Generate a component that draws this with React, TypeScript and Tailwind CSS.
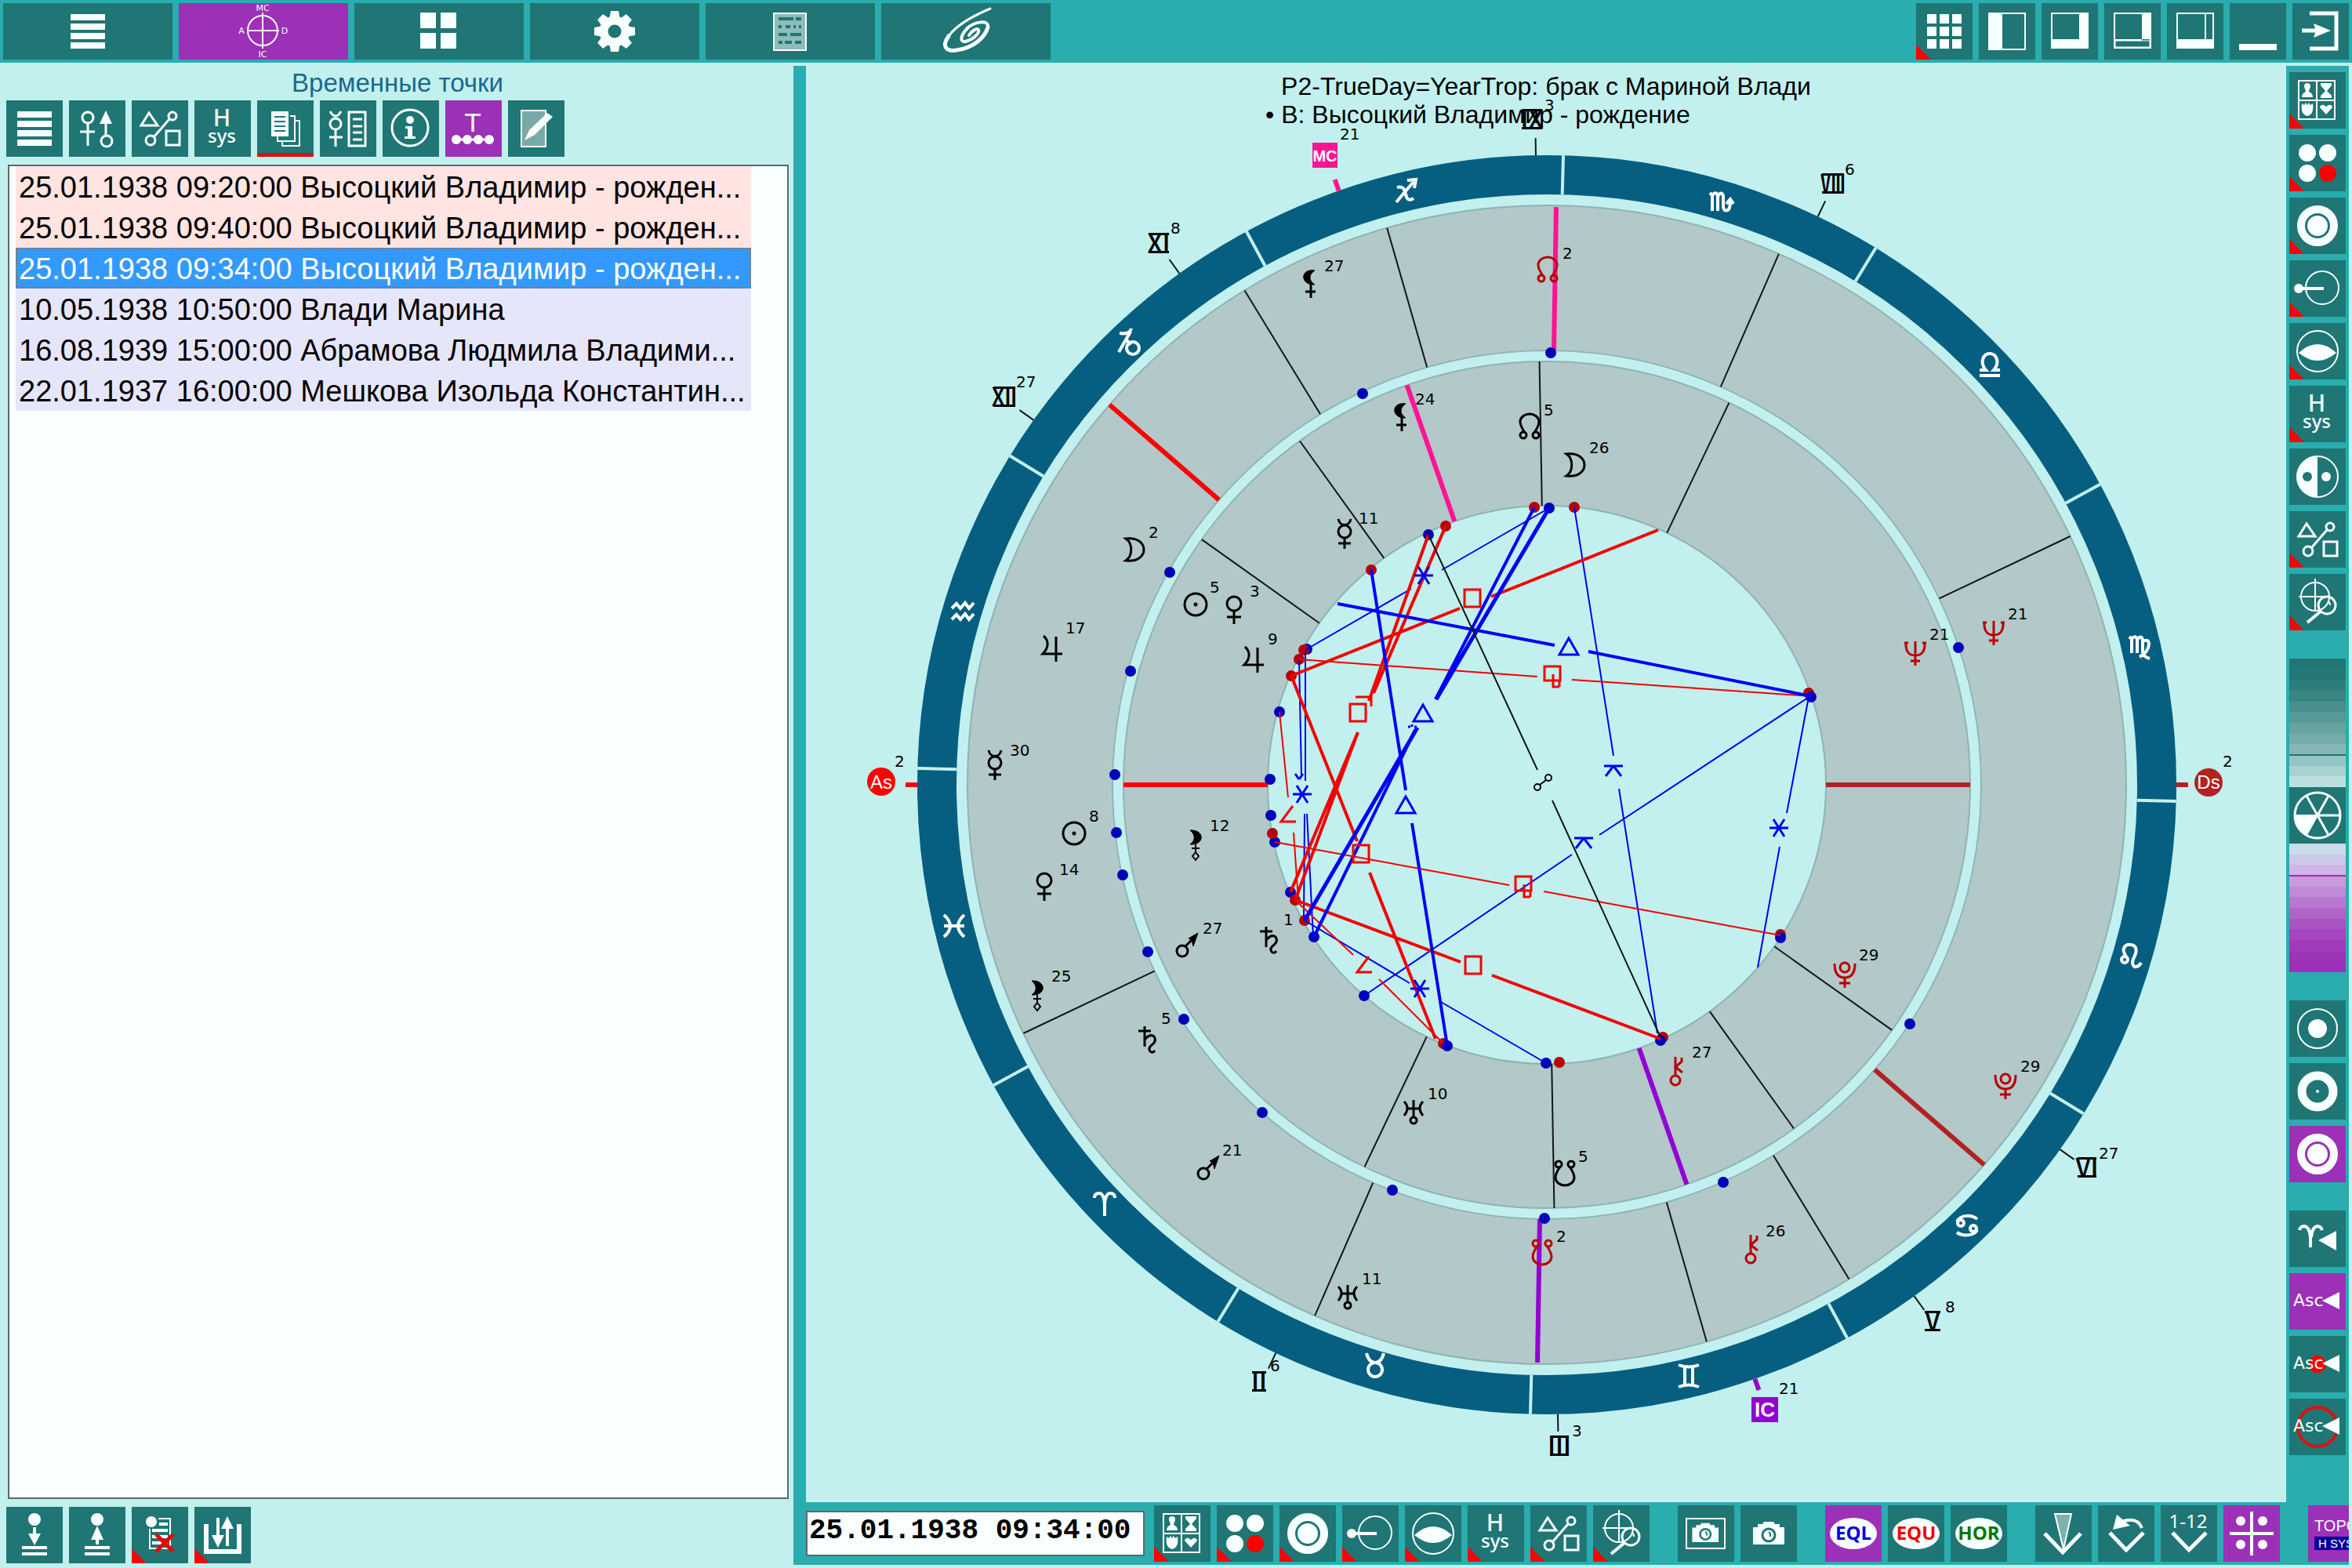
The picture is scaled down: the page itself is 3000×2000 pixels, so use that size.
import type { ReactNode } from "react";

type Point = [number, number];

/* ---------- toolbar icons, all on a 72px grid ---------- */

const HOUSE_ICON = (
  <g fill="#f8ffff" stroke="none" textAnchor="middle" className="font-['Noto_Sans'] font-medium">
    <text x="35" y="33" fontSize="30">H</text>
    <text x="35" y="54" fontSize="24">sys</text>
  </g>
);

const BARS_ICON = (
  <g fill="#f8ffff" stroke="none">
    <path d="M14 14h44v8H14zM14 26h44v8H14zM14 38h44v8H14zM14 50h44v8H14z" />
  </g>
);

const ASPECTS_ICON = (
  <g strokeWidth="3">
    <path d="M22 16L12 32H33Z" />
    <circle cx="52" cy="20" r="5" />
    <circle cx="24" cy="51" r="6" />
    <path d="M48 24L28 47" />
    <rect x="44" y="39" width="17" height="18" />
  </g>
);

const CARDS_ICON = (
  <g strokeWidth="2">
    <rect x="12" y="11" width="46" height="49" />
    <path d="M35 11V60M12 36H58" />
    <g fill="#f8ffff" stroke="none">
      <circle cx="23" cy="18" r="4" />
      <path d="M20 21h6l-1 4q5 2 5 7H16q0-5 5-7z" />
      <path d="M40 14h14v3l-6 7 6 6v3H40v-3l6-6-6-7z" />
      <path d="M16 40l3 2 2-3 2 3 2-3 2 3 3-2q2 14-7 16q-9-2-7-16z" />
      <path d="M47 54L39 45q1-4 5-3l3 2 3-2q4-1 5 3z" />
    </g>
  </g>
);

const DOTS_ICON = (
  <g fill="#f8ffff" stroke="none">
    <circle cx="23" cy="23" r="11" />
    <circle cx="49" cy="23" r="11" />
    <circle cx="23" cy="49" r="11" />
    <circle cx="49" cy="49" r="11" fill="#ff0000" />
  </g>
);

const RINGS_ICON = (
  <>
    <circle cx="36" cy="36" r="21" strokeWidth="10" />
    <circle cx="36" cy="36" r="13" fill="#f8ffff" stroke="none" />
  </>
);

const ORBIT_ICON = (
  <>
    <circle cx="42" cy="35" r="21" strokeWidth="2" />
    <path d="M12 36H44" strokeWidth="4" />
    <circle cx="12" cy="36" r="6" fill="#f8ffff" stroke="none" />
  </>
);

const LENS_ICON = (
  <>
    <circle cx="36" cy="36" r="26" strokeWidth="2" />
    <path d="M12 38Q24 27 36 27T60 38Q48 48 36 48T12 38Z" fill="#f8ffff" stroke="none" />
  </>
);

const HALF_ICON = (
  <>
    <circle cx="36" cy="36" r="26" strokeWidth="2" />
    <path d="M36 10A26 26 0 0 0 36 62Z" fill="#f8ffff" stroke="none" />
    <circle cx="23" cy="36" r="6" fill="#1f7674" stroke="none" />
    <circle cx="47" cy="36" r="6" fill="#f8ffff" stroke="none" />
  </>
);

const SEARCH_ICON = (
  <g strokeWidth="2">
    <circle cx="33" cy="29" r="18" />
    <path d="M33 6V48M12 29H52" />
    <circle cx="48" cy="40" r="11" strokeWidth="3" />
    <path d="M52 40q0-4-3-5" />
    <path d="M41 47L23 62" strokeWidth="4" />
  </g>
);

const CHART_ICON = (
  <g strokeWidth="2">
    <circle cx="35" cy="35" r="19" />
    <path d="M15 35H56M35 12V58" />
    <g fill="#f8ffff" stroke="none" fontSize="11" textAnchor="middle" className="font-['DejaVu_Sans']">
      <text x="35" y="10">MC</text>
      <text x="35" y="69">IC</text>
      <text x="8" y="39">A</text>
      <text x="63" y="39">D</text>
    </g>
  </g>
);

const TILES_ICON = (
  <path d="M12 12h20v20H12zM38 12h20v20H38zM12 38h20v20H12zM38 38h20v20H38z" fill="#f8ffff" stroke="none" />
);

const GEAR_ICON = (
  <>
    <g stroke="none" fill="#f8ffff">
      {[0, 45, 90, 135, 180, 225, 270, 315].map((a) => (
        <path key={a} d="M31 10H41L43 22H29Z" transform={`rotate(${a} 36 36)`} />
      ))}
    </g>
    <circle cx="36" cy="36" r="14" strokeWidth="11" />
  </>
);

const SHEET_ICON = (
  <>
    <rect x="15" y="13" width="41" height="47" fill="#8dbcba" strokeWidth="2" />
    <g stroke="#1f7674" strokeWidth="4">
      <path d="M21 20H40M43 20H50" />
      <path d="M21 30H25M30 30H36M40 30H43M47 30H50" />
      <path d="M21 40H32M36 40H50" />
      <path d="M21 50H26M29 50H38M42 50H50" />
    </g>
  </>
);

const SWIRL_ICON = (
  <g strokeLinecap="round">
    <path d="M67 7C48 15 24 28 14 42" strokeWidth="3" />
    <path d="M14 42C4 56 12 62 24 60C46 57 60 44 64 31" strokeWidth="5" />
    <path d="M64 31C66 20 46 24 38 32C29 41 28 50 35 49C45 47 54 38 52 34C50 31 43 36 40 41" strokeWidth="4" />
  </g>
);

const GRID9_ICON = (
  <path
    d="M14 14h12v12H14zM30 14h12v12H30zM46 14h12v12H46zM14 30h12v12H14zM30 30h12v12H30zM46 30h12v12H46zM14 46h12v12H14zM30 46h12v12H30zM46 46h12v12H46z"
    fill="#f8ffff"
    stroke="none"
  />
);

const PANE_LEFT_ICON = (
  <>
    <rect x="13" y="13" width="46" height="46" strokeWidth="2" />
    <path d="M12 12h18v48H12z" fill="#f8ffff" stroke="none" />
  </>
);

const PANE_RIGHT_BOTTOM_ICON = (
  <>
    <rect x="13" y="13" width="46" height="44" strokeWidth="2" />
    <path d="M48 12h12v46H12V46h36z" fill="#f8ffff" stroke="none" />
  </>
);

const PANE_RIGHT_ICON = (
  <>
    <rect x="13" y="13" width="46" height="44" strokeWidth="2" />
    <path d="M13 47H48" strokeWidth="2" />
    <path d="M48 12h12v34H48z" fill="#f8ffff" stroke="none" />
    <path d="M14 48H58V56H14Z" fill="#1f7674" strokeWidth="1" />
  </>
);

const PANE_BOTTOM_ICON = (
  <>
    <rect x="13" y="13" width="46" height="44" strokeWidth="2" />
    <path d="M49 12V46" strokeWidth="2" />
    <path d="M12 46h48v12H12z" fill="#f8ffff" stroke="none" />
  </>
);

const MINIMIZE_ICON = <path d="M12 52h48v8H12z" fill="#f8ffff" stroke="none" />;

const EXIT_ICON = (
  <>
    <path d="M22 13H56V58H22" strokeWidth="5" />
    <path d="M12 35H30" strokeWidth="5" />
    <path d="M27 26L49 35L27 44L30 35Z" fill="#f8ffff" stroke="none" />
  </>
);

const PLANETS_ICON = (
  <g strokeWidth="3">
    <circle cx="24" cy="22" r="7" />
    <path d="M24 29V58M14 40H33" />
    <path d="M47 24V44" />
    <circle cx="48" cy="52" r="7" />
    <path d="M47 13L55 30H39Z" fill="#f8ffff" stroke="none" />
  </g>
);

const PAGES_ICON = (
  <g strokeWidth="2">
    <path d="M42 20H48V52H26V46" />
    <path d="M48 26H54V58H32V52" />
    <path d="M18 14h22v32H18z" fill="#f8ffff" stroke="none" />
    <path d="M22 21H36M22 27H36M22 33H36M22 39H36" stroke="#1f7674" />
    <path d="M0 67h72v5H0z" fill="#e01010" stroke="none" />
  </g>
);

const PLANET_LIST_ICON = (
  <g strokeWidth="3">
    <path d="M13 14Q20 26 27 14" />
    <circle cx="20" cy="30" r="7" />
    <path d="M20 37V59M12 47H29" />
    <rect x="37" y="15" width="21" height="43" />
    <path d="M42 24H54M42 33H54M42 41H54M42 50H54" />
  </g>
);

const INFO_ICON = (
  <>
    <circle cx="35" cy="35" r="23" strokeWidth="3" />
    <circle cx="35" cy="25" r="5" fill="#f8ffff" stroke="none" />
    <path d="M29 33h9v13h4v3H28v-3h4V36h-3z" fill="#f8ffff" stroke="none" />
  </>
);

const TIME_ICON = (
  <>
    <text x="35" y="40" fontSize="32" fill="#f8ffff" stroke="none" textAnchor="middle" className="font-['DejaVu_Sans']">
      T
    </text>
    <path d="M14 50H56" strokeWidth="3" />
    <g fill="#f8ffff" stroke="none">
      <circle cx="14" cy="50" r="6" />
      <circle cx="28" cy="50" r="6" />
      <circle cx="42" cy="50" r="6" />
      <circle cx="56" cy="50" r="6" />
    </g>
  </>
);

const NOTE_ICON = (
  <>
    <rect x="17" y="13" width="31" height="46" fill="#78aaa8" strokeWidth="2" />
    <path d="M21 51L27 38L50 16L57 21L34 44Z" fill="#f8ffff" stroke="none" />
  </>
);

const INSERT_ICON = (
  <>
    <path d="M36 26V40" strokeWidth="4" />
    <path d="M28 34h16l-8 15zM20 50h32v4H20zM20 58h32v4H20z" fill="#f8ffff" stroke="none" />
    <circle cx="36" cy="16" r="8" fill="#f8ffff" stroke="none" />
  </>
);

const TAKE_ICON = (
  <>
    <path d="M36 36V48" strokeWidth="4" />
    <path d="M36 24l8 18H28zM20 50h32v4H20zM20 58h32v4H20z" fill="#f8ffff" stroke="none" />
    <circle cx="36" cy="16" r="8" fill="#f8ffff" stroke="none" />
  </>
);

const DELETE_ICON = (
  <>
    <path d="M34 15H49V53H23V28" strokeWidth="2" />
    <path d="M35 22H46M26 30H46M26 38H46M26 46H46" strokeWidth="4" />
    <circle cx="25" cy="19" r="7" fill="#f8ffff" stroke="none" />
    <path d="M31 35L53 57M53 35L31 57" stroke="#ee0000" strokeWidth="5" />
  </>
);

const TRANSFER_ICON = (
  <>
    <path d="M15 22V57H57V22" strokeWidth="6" />
    <path d="M30 14V42M42 24V50" strokeWidth="4" />
    <path d="M22 36h16l-8 16zM42 12l8 16H34z" fill="#f8ffff" stroke="none" />
  </>
);

const CAMERA_SHAPE = (
  <>
    <path d="M16 28h6v-4h6l2-3h12l2 3h6v4h6v22H16z" fill="#f8ffff" stroke="none" />
    <circle cx="36" cy="38" r="8" stroke="#1f7674" strokeWidth="3" />
    <path d="M36 34q3 2 2 6" stroke="#1f7674" strokeWidth="2" />
  </>
);

const CAMERA_FRAME_ICON = (
  <>
    <rect x="11" y="17" width="49" height="38" strokeWidth="2" />
    <g transform="translate(5 5) scale(.84)">{CAMERA_SHAPE}</g>
  </>
);

const FALL_ICON = (
  <>
    <path d="M12 36L35 60L58 36" strokeWidth="5" />
    <path d="M25 11H46L36 56Z" fill="#7fb0ae" strokeWidth="2" />
  </>
);

const BACK_ICON = (
  <>
    <path d="M15 35L36 57L58 35" strokeWidth="5" />
    <path d="M30 21Q50 14 56 29" strokeWidth="4" />
    <path d="M19 31L24 12L41 26Z" fill="#f8ffff" stroke="none" />
  </>
);

const TWELVE_ICON = (
  <>
    <path d="M15 35L36 57L58 35" strokeWidth="5" />
    <text x="35" y="29" fontSize="24" fill="#f8ffff" stroke="none" textAnchor="middle" className="font-['Noto_Sans']">
      1-12
    </text>
  </>
);

const QUADRANT_ICON = (
  <>
    <path d="M36 8V64M8 36H64" strokeWidth="4" />
    <g fill="#f8ffff" stroke="none">
      <circle cx="22" cy="20" r="6" />
      <circle cx="50" cy="20" r="6" />
      <circle cx="22" cy="50" r="6" />
      <circle cx="50" cy="50" r="6" />
    </g>
  </>
);

const TOPO_ICON = (
  <g stroke="none" fill="#f8ffff" className="font-['Liberation_Sans']">
    <text x="8" y="33" fontSize="20">TOPO</text>
    <path d="M8 40h64v17H8z" fill="#00009c" />
    <text x="13" y="54" fontSize="15">H SYS</text>
  </g>
);

const WHEEL_ICON = (
  <>
    <circle cx="36" cy="36" r="29" strokeWidth="3" />
    <path d="M36 36H65M36 36L50 11M36 36L22 11M36 36L50 61" strokeWidth="3" />
    <path d="M36 36H7A29 29 0 0 0 22 61Z" fill="#f8ffff" strokeWidth="2" />
  </>
);

const CORE_ICON = (
  <>
    <circle cx="36" cy="36" r="25" strokeWidth="2" />
    <circle cx="36" cy="36" r="12" fill="#f8ffff" stroke="none" />
  </>
);

const BAND_ICON = (
  <>
    <circle cx="36" cy="36" r="20" strokeWidth="11" />
    <circle cx="36" cy="36" r="2" fill="#f8ffff" stroke="none" />
  </>
);

const ARIES_ICON = (
  <>
    <path d="M13 25Q14 20 19 20Q26 21 27 34V47M42 25Q40 20 36 20Q29 21 28 34" strokeWidth="4" />
    <path d="M37 38L60 26V51Z" fill="#f8ffff" stroke="none" />
  </>
);

const ASC_LABEL = (
  <g stroke="none" fill="#f8ffff">
    <text x="5" y="42" fontSize="22" className="font-['DejaVu_Sans']">
      Asc
    </text>
    <path d="M42 35L64 24V46Z" />
  </g>
);

const ASC_DOT_ICON = (
  <>
    <circle cx="36" cy="36" r="11" fill="#ff0000" stroke="none" />
    {ASC_LABEL}
  </>
);

const ASC_RING_ICON = (
  <>
    <circle cx="36" cy="36" r="25" stroke="#dd1111" strokeWidth="4" />
    {ASC_LABEL}
  </>
);

function coordIcon(text: string, color: string) {
  return (
    <g stroke="none">
      <ellipse cx="36" cy="36" rx="30" ry="20" fill="#f8ffff" />
      <text x="36" y="44" fontSize="24" fill={color} textAnchor="middle" className="font-['Open_Sans'] font-bold">
        {text}
      </text>
    </g>
  );
}

interface ToolProps {
  label: string;
  icon: ReactNode;
  active?: boolean;
  menu?: boolean;
  wide?: boolean;
}

function Tool({ label, icon, active, menu, wide }: ToolProps) {
  return (
    <button
      type="button"
      aria-label={label}
      className={`flex h-[72px] shrink-0 justify-center ${wide ? "w-[216px]" : "w-[72px]"} ${
        active ? "bg-[#9c30b6]" : "bg-[#1f7674]"
      }`}
    >
      <svg width="72" height="72" viewBox="0 0 72 72" fill="none" stroke="#f8ffff">
        {icon}
        {menu && <path d="M0 53L19 72H0Z" fill="#ff0000" stroke="none" />}
      </svg>
    </button>
  );
}

const MAIN_TABS: ToolProps[] = [
  { label: "Меню", icon: BARS_ICON },
  { label: "Карта", icon: CHART_ICON, active: true },
  { label: "Окна", icon: TILES_ICON },
  { label: "Настройки", icon: GEAR_ICON },
  { label: "Таблица", icon: SHEET_ICON },
  { label: "О программе", icon: SWIRL_ICON },
];

const WINDOW_TOOLS: ToolProps[] = [
  { label: "Сетка", icon: GRID9_ICON, menu: true },
  { label: "Левая панель", icon: PANE_LEFT_ICON },
  { label: "Правая и нижняя панели", icon: PANE_RIGHT_BOTTOM_ICON },
  { label: "Правая панель", icon: PANE_RIGHT_ICON },
  { label: "Нижняя панель", icon: PANE_BOTTOM_ICON },
  { label: "Свернуть", icon: MINIMIZE_ICON },
  { label: "Выход", icon: EXIT_ICON },
];

const LIST_TOOLS: ToolProps[] = [
  { label: "Список", icon: BARS_ICON },
  { label: "Планеты", icon: PLANETS_ICON },
  { label: "Аспекты", icon: ASPECTS_ICON },
  { label: "Дома", icon: HOUSE_ICON },
  { label: "Страницы", icon: PAGES_ICON },
  { label: "Положения", icon: PLANET_LIST_ICON },
  { label: "Информация", icon: INFO_ICON },
  { label: "Временные точки", icon: TIME_ICON, active: true },
  { label: "Заметки", icon: NOTE_ICON },
];

const EDIT_TOOLS: ToolProps[] = [
  { label: "Добавить", icon: INSERT_ICON },
  { label: "Извлечь", icon: TAKE_ICON },
  { label: "Удалить", icon: DELETE_ICON, menu: true },
  { label: "Обмен", icon: TRANSFER_ICON, menu: true },
];

const BOTTOM_GROUPS: ToolProps[][] = [
  [
    { label: "Наборы", icon: CARDS_ICON, menu: true },
    { label: "Точки", icon: DOTS_ICON, menu: true },
    { label: "Круги", icon: RINGS_ICON, menu: true },
    { label: "Орбита", icon: ORBIT_ICON, menu: true },
    { label: "Горизонт", icon: LENS_ICON, menu: true },
    { label: "Система домов", icon: HOUSE_ICON, menu: true },
    { label: "Аспекты", icon: ASPECTS_ICON, menu: true },
    { label: "Поиск", icon: SEARCH_ICON, menu: true },
  ],
  [
    { label: "Снимок окна", icon: CAMERA_FRAME_ICON },
    { label: "Снимок", icon: CAMERA_SHAPE },
  ],
  [
    { label: "Эклиптика", icon: coordIcon("EQL", "#0000dd"), active: true },
    { label: "Экватор", icon: coordIcon("EQU", "#ee0000") },
    { label: "Горизонт", icon: coordIcon("HOR", "#007800") },
  ],
  [
    { label: "Вниз", icon: FALL_ICON },
    { label: "Назад", icon: BACK_ICON },
    { label: "Дома 1-12", icon: TWELVE_ICON },
    { label: "Квадранты", icon: QUADRANT_ICON, active: true },
  ],
  [{ label: "Топоцентрическая", icon: TOPO_ICON, active: true }],
];

const SIDE_TOP: ToolProps[] = [
  { label: "Наборы", icon: CARDS_ICON, menu: true },
  { label: "Точки", icon: DOTS_ICON, menu: true },
  { label: "Круги", icon: RINGS_ICON, menu: true },
  { label: "Орбита", icon: ORBIT_ICON, menu: true },
  { label: "Горизонт", icon: LENS_ICON, menu: true },
  { label: "Система домов", icon: HOUSE_ICON, menu: true },
  { label: "Инь-ян", icon: HALF_ICON },
  { label: "Аспекты", icon: ASPECTS_ICON, menu: true },
  { label: "Поиск", icon: SEARCH_ICON, menu: true },
];

const SIDE_RINGS: ToolProps[] = [
  { label: "Центр", icon: CORE_ICON },
  { label: "Внешний круг", icon: BAND_ICON },
  { label: "Оба круга", icon: RINGS_ICON, active: true },
];

const SIDE_START: ToolProps[] = [
  { label: "От Овна", icon: ARIES_ICON },
  { label: "От Асцендента", icon: ASC_LABEL, active: true },
  { label: "Внутренний Асцендент", icon: ASC_DOT_ICON },
  { label: "Внешний Асцендент", icon: ASC_RING_ICON },
];

const TEAL_SHADES = [
  "bg-[#1f7674]", "bg-[#247876]", "bg-[#2c7d7c]", "bg-[#388583]", "bg-[#488f8d]", "bg-[#579997]",
  "bg-[#66a3a1]", "bg-[#76adab]", "bg-[#86b7b6]", "bg-[#96c4c4]", "bg-[#a8d2d1]", "bg-[#bbe0de]",
];

const PURPLE_SHADES = [
  "bg-[#c8dcea]", "bg-[#ccc8e8]", "bg-[#cfb6e4]", "bg-[#c79bdc]", "bg-[#c08ad6]", "bg-[#b876cf]",
  "bg-[#b064c8]", "bg-[#a954c2]", "bg-[#a446bd]", "bg-[#a03bb9]", "bg-[#9e34b7]", "bg-[#9c30b6]",
];

/* ---------- chart ---------- */

const CX = 1973;
const CY = 1001;

const BODIES: Record<string, ReactNode> = {
  sun: (
    <>
      <circle r="14" />
      <circle r="1" />
    </>
  ),
  moon: <path d="M-11-14C4-16 12-8 12 0S4 16-11 14C-2 8-2-8-11-14Z" />,
  mercury: (
    <>
      <path d="M-8-19C-6-9 6-9 8-19M0 5V19M-8 12H8" />
      <circle cy="-3" r="8" />
    </>
  ),
  venus: (
    <>
      <circle cy="-8" r="9" />
      <path d="M0 2V18M-9 9H9" />
    </>
  ),
  mars: (
    <>
      <circle cx="-6" cy="7" r="7" />
      <path d="M-2 1L8-9" />
      <path d="M14-16L2-9L6-7L8 1Z" fill="currentColor" strokeWidth="1" />
    </>
  ),
  jupiter: <path d="M-11-16C-4-10-4-1-12 7H13M5-15V17" />,
  saturn: <path d="M-4-17V9M-12-11H4M-4 0Q3-8 8-4Q12 2 5 7Q0 11 3 15Q6 18 9 14" />,
  uranus: (
    <>
      <path d="M-12-13Q-4-5-12 5M12-13Q4-5 12 5M-8-4H8M0-15V7" />
      <circle cy="11" r="4" />
    </>
  ),
  neptune: <path d="M-12-14Q-13 3 0 3Q13 3 12-14M0-15V16M-6 10H6M-14-13H-9M9-13H14" />,
  pluto: (
    <>
      <path d="M-13-14Q-13 4 0 4Q13 4 13-14M0 4V17M-7 11H7" />
      <circle cy="-9" r="6" />
    </>
  ),
  chiron: (
    <>
      <circle cy="12" r="6" />
      <path d="M0-18V6M8-17V-12L0-5L9 2" />
    </>
  ),
  north: (
    <>
      <path d="M-6 8C-10 2-12-3-12-6C-12-12-6-16 0-16S12-12 12-6C12-3 10 2 6 8" />
      <circle cx="-8" cy="11" r="4" />
      <circle cx="8" cy="11" r="4" />
    </>
  ),
  south: (
    <>
      <path d="M-6-8C-10-2-12 3-12 6C-12 12-6 16 0 16S12 12 12 6C12 3 10-2 6-8" />
      <circle cx="-8" cy="-11" r="4" />
      <circle cx="8" cy="-11" r="4" />
    </>
  ),
  lilith: (
    <>
      <path d="M7-17C-12-20-12 2 7 1C-1-4-1-12 7-17Z" fill="currentColor" strokeWidth="1" />
      <path d="M2 0V18M-5 10H8" />
    </>
  ),
  selena: (
    <>
      <path d="M-7-19C12-20 12 0-7-1C0-6 0-13-7-19Z" fill="currentColor" strokeWidth="1" />
      <path d="M0-1V9M-5 4H5M0 9L4 14L0 19L-4 14Z" strokeWidth="2" />
    </>
  ),
};

// body, centre x, centre y, degree, degree x, degree baseline
type Placement = [string, number, number, string, number, number];

const DARK_BODIES: Placement[] = [
  ["lilith", 1670, 362, "27", 1689, 346],
  ["lilith", 1786, 532, "24", 1805, 516],
  ["north", 1951, 544, "5", 1969, 530],
  ["moon", 2009, 593, "26", 2027, 578],
  ["mercury", 1715, 681, "11", 1733, 668],
  ["moon", 1447, 701, "2", 1465, 686],
  ["jupiter", 1342, 827, "17", 1359, 808],
  ["mercury", 1269, 976, "30", 1288, 964],
  ["sun", 1370, 1063, "8", 1389, 1048],
  ["venus", 1332, 1131, "14", 1351, 1116],
  ["selena", 1323, 1270, "25", 1341, 1252],
  ["saturn", 1464, 1326, "5", 1481, 1306],
  ["mars", 1541, 1490, "21", 1559, 1474],
  ["uranus", 1719, 1654, "11", 1737, 1638],
  ["sun", 1525, 771, "5", 1543, 756],
  ["venus", 1574, 778, "3", 1594, 761],
  ["jupiter", 1599, 841, "9", 1617, 822],
  ["selena", 1525, 1078, "12", 1543, 1060],
  ["mars", 1514, 1206, "27", 1534, 1191],
  ["saturn", 1619, 1199, "1", 1637, 1180],
  ["uranus", 1803, 1418, "10", 1821, 1402],
  ["south", 1996, 1496, "5", 2013, 1482],
];

const RED_BODIES: Placement[] = [
  ["north", 1974, 344, "2", 1993, 330],
  ["south", 1967, 1597, "2", 1985, 1584],
  ["chiron", 2233, 1593, "26", 2252, 1577],
  ["chiron", 2137, 1366, "27", 2158, 1349],
  ["pluto", 2558, 1385, "29", 2577, 1367],
  ["pluto", 2353, 1243, "29", 2371, 1225],
  ["neptune", 2543, 807, "21", 2561, 790],
  ["neptune", 2443, 833, "21", 2461, 816],
];

const SIGNS: [string, number, number, ReactNode][] = [
  ["sagittarius", 1793, 244, <path d="M-12 14Q-4 4 10-12M2-14L13-15L11-4M-11-5Q-2-8 0 4Q2 14 10 9" />],
  ["capricorn", 1439, 436, <><path d="M-11-11Q2-9 4-17M3-13L-12 13M-3-4L3 4" /><circle cx="6" cy="8" r="8" /></>],
  ["aquarius", 1229, 780, <path d="M-15-4L-9-10L-4-4L2-11L7-4L13-11M-15 10L-9 4L-4 10L2 3L7 10L13 3" />],
  ["pisces", 1217, 1181, <path d="M-13-14Q3 0-13 14M13-14Q-3 0 13 14M-13 0H13" />],
  ["aries", 1409, 1536, <path d="M-13-8Q-13-14-7-14Q-1-14 0 0V15M13-8Q13-14 7-14Q1-14 0 0" />],
  ["taurus", 1754, 1741, <><path d="M-11-15Q-8-3 0-3Q8-3 11-15" /><circle cy="6" r="9" /></>],
  ["gemini", 2154, 1755, <path d="M-13-14Q0-9 13-14M-13 14Q0 9 13 14M-5-11V11M5-11V11" />],
  ["cancer", 2509, 1563, <><path d="M-13-5C-8-14 6-14 13-8M13 6C8 14-6 14-13 9" /><circle cx="-8" cy="-3" r="4" /><circle cx="8" cy="4" r="4" /></>],
  ["leo", 2718, 1219, <><circle cx="-8" cy="5" r="4" /><path d="M-6 1C-14-10-6-15 0-14C8-13 8-5 4 2C0 10 3 15 7 14Q11 13 13 9" /></>],
  ["virgo", 2730, 824, <path d="M-14-12L-11-9V9M-11-9Q-6-15-4-8V9M-4-8Q1-15 3-8V8Q4 14 12 16M3-6Q11-10 11-2Q10 8-1 14" />],
  ["libra", 2538, 465, <path d="M-13 14H13M-13 7H-5C-13-2-9-14 0-14S13-2 5 7H13" />],
  ["scorpio", 2195, 258, <path d="M-14-12L-11-9V11M-11-9Q-6-15-4-8V11M-4-8Q1-15 3-8V6Q4 12 9 10Q12 8 12-3M7 2L12-4L16 2" />],
];

// numeral, centre x, baseline, degree, degree x, degree baseline, width of the serif bars
const HOUSES: [string, number, number, string, number, number, number][] = [
  ["Ⅸ", 1954, 164, "3", 1970, 141, 26],
  ["Ⅺ", 1478, 322, "8", 1493, 298, 26],
  ["Ⅻ", 1281, 518, "27", 1296, 494, 28],
  ["Ⅱ", 1606, 1774, "6", 1620, 1749, 18],
  ["Ⅲ", 1989, 1856, "3", 2005, 1832, 24],
  ["Ⅴ", 2465, 1697, "8", 2481, 1674, 20],
  ["Ⅵ", 2662, 1501, "27", 2677, 1478, 24],
  ["Ⅷ", 2338, 246, "6", 2353, 223, 28],
];

const OUTER_CUSPS = [253.99, 238.56, 293.6, 334.6, 73.99, 58.56, 113.6, 154.6];
const INNER_CUSPS = [215.4, 234.3, 269, 295.5, 35.4, 54.3, 89, 115.5];

const MIDDLE_DOTS: Point[] = [
  [1738, 502], [1978, 450], [1492, 730], [1442, 856], [1422, 988], [1424, 1062], [1432, 1116], [1464, 1214],
  [1510, 1300], [1610, 1419], [1776, 1518], [1970, 1554], [2198, 1508], [2436, 1306], [2498, 826],
];

const BLUE = "#0000f4";
const RED = "#f40000";

const INNER_DOTS: [number, number, string][] = [
  [1667, 828, "#0000b8"], [1663, 829, "#b80000"], [1749, 727, "#b80000"], [1822, 682, "#0000b8"],
  [1844, 671, "#b80000"], [1957, 647, "#b80000"], [1976, 648, "#0000b8"], [2008, 647, "#b80000"],
  [1657, 841, "#b80000"], [1647, 862, "#b80000"], [1632, 908, "#0000b8"], [1620, 994, "#0000b8"],
  [1621, 1040, "#0000b8"], [1626, 1074, "#0000b8"], [1623, 1063, "#b80000"], [1646, 1138, "#0000b8"],
  [1652, 1148, "#b80000"], [1664, 1174, "#b80000"], [1676, 1195, "#0000b8"], [1740, 1270, "#0000b8"],
  [1841, 1331, "#b80000"], [1846, 1334, "#0000b8"], [1972, 1356, "#0000b8"], [1989, 1355, "#b80000"],
  [2121, 1323, "#b80000"], [2118, 1327, "#0000b8"], [2271, 1192, "#b80000"], [2271, 1196, "#0000b8"],
  [2307, 884, "#b80000"], [2310, 889, "#0000b8"],
];

// colour, stroke width, path
const ASPECT_LINES: [string, number, string][] = [
  [BLUE, 2, "M1976 648L1839 727M1800 751L1665 829"],
  [BLUE, 2, "M2309 888L2040 1065M2005 1090L1740 1270"],
  [BLUE, 2, "M1664 1174L1798 1254M1838 1278L1972 1356"],
  [BLUE, 2, "M2008 647L2058 964M2065 1006L2114 1318"],
  [BLUE, 2, "M2307 889L2279 1037M2270 1080L2242 1234"],
  [BLUE, 2, "M1665 829V996M1657 841L1660 991M1664 1038L1663 1174M1667 1038L1675 1195"],
  [RED, 2, "M1632 908L1643 1017M1650 1062L1656 1148"],
  [RED, 2, "M1652 1148L1726 1218M1759 1249L1841 1331"],
  [RED, 2, "M1657 841L1961 863M2005 867L2310 888"],
  [RED, 2, "M1626 1074L1925 1129M1969 1137L2271 1193"],
  [RED, 4, "M1822 682L1746 894M1844 671L1752 884M1732 934L1646 1138M1732 934L1652 1148"],
  [RED, 4, "M1647 862L1862 776M1902 761L2115 676"],
  [RED, 4, "M1647 862L1731 1073M1747 1113L1831 1325"],
  [RED, 4, "M1652 1148L1863 1227M1903 1244L2118 1325"],
  [BLUE, 4, "M1706 770L1983 823M2026 831L2310 888"],
  [BLUE, 4, "M1749 727L1793 1008M1801 1050L1846 1334"],
  [BLUE, 4, "M1957 647L1831 892M1805 931L1676 1195"],
  [BLUE, 5, "M1976 648L1832 892M1808 928L1664 1174"],
  ["#101818", 2, "M1822 682L1961 982M1980 1021L2118 1323"],
];

const STAR = "M-12 0H12M-7-11L7 11M7-11L-7 11";
const SQUARE = "M-10-11H10V11H-10Z";
const TRINE = "M0-11L-12 10H12Z";
const QUINCUNX = "M-12-6H12M0-6L-10 7M0-6L10 7";
const SESQUI = "M-10-13H10V5H-10ZM1-3V13H9M1 5H9V13";
const SEMI = "M6-11L-9 9H10";

const ASPECT_MARKS: [number, number, string, string][] = [
  [1816, 734, BLUE, STAR],
  [1661, 1013, BLUE, STAR],
  [2269, 1056, BLUE, STAR],
  [1811, 1261, BLUE, STAR],
  [1657, 990, BLUE, "M-5-3L0 4M5-3L0 4"],
  [1732, 909, RED, SQUARE],
  [1739, 893, RED, "M-10-4H10V8"],
  [1878, 763, RED, SQUARE],
  [1736, 1089, RED, SQUARE],
  [1879, 1231, RED, SQUARE],
  [2001, 825, BLUE, TRINE],
  [1793, 1027, BLUE, TRINE],
  [1815, 910, BLUE, TRINE],
  [1801, 927, BLUE, "M0-3V0M-5 0H-2M3 0H6"],
  [2058, 983, BLUE, QUINCUNX],
  [2020, 1075, BLUE, QUINCUNX],
  [1980, 863, RED, SESQUI],
  [1943, 1131, RED, SESQUI],
  [1643, 1039, RED, SEMI],
  [1740, 1231, RED, SEMI],
];

function radial(angle: number, from: number, to: number) {
  const a = (angle * Math.PI) / 180;
  return {
    x1: CX + Math.cos(a) * from,
    y1: CY + Math.sin(a) * from,
    x2: CX + Math.cos(a) * to,
    y2: CY + Math.sin(a) * to,
  };
}

function Bodies({ items, color }: { items: Placement[]; color: string }) {
  return (
    <>
      {items.map(([body, x, y, degree, dx, dy]) => (
        <g key={`${body}-${x}`}>
          <g transform={`translate(${x} ${y})`} fill="none" stroke={color} color={color} strokeWidth="3">
            {BODIES[body]}
          </g>
          <text x={dx} y={dy} fontSize="20">{degree}</text>
        </g>
      ))}
    </>
  );
}

function NatalChart() {
  return (
    <svg viewBox="1028 84 1888 1832" className="block h-full w-full font-['DejaVu_Sans']" role="img" aria-label="Карта">
      {/* zodiac belt and the two house rings */}
      <circle cx={CX} cy={CY} r="778" fill="none" stroke="#065f80" strokeWidth="50" />
      <circle cx={CX} cy={CY} r="647" fill="none" stroke="#b3c8c9" strokeWidth="184" />
      <circle cx={CX} cy={CY} r="448" fill="none" stroke="#b3c8c9" strokeWidth="184" />
      <g fill="none" stroke="#8fb3b3" strokeWidth="2">
        <circle cx={CX} cy={CY} r="739" />
        <circle cx={CX} cy={CY} r="554" />
        <circle cx={CX} cy={CY} r="540" />
        <circle cx={CX} cy={CY} r="356" />
      </g>

      {Array.from({ length: 12 }, (_, i) => (
        <line key={i} {...radial(1.5 + i * 30, 753, 803)} stroke="#c2f0ee" strokeWidth="4" />
      ))}
      {SIGNS.map(([name, x, y, shape]) => (
        <g key={name} transform={`translate(${x} ${y})`} fill="none" stroke="#ffffff" strokeWidth="4">
          {shape}
        </g>
      ))}

      {/* cusps */}
      <g stroke="#101818" strokeWidth="2">
        {OUTER_CUSPS.map((a) => (
          <line key={a} {...radial(a, 554, 739)} />
        ))}
        {INNER_CUSPS.map((a) => (
          <line key={a} {...radial(a, 356, 540)} />
        ))}
        {INNER_CUSPS.map((a) => (
          <line key={a} {...radial(a, 803, 825)} />
        ))}
      </g>
      <g strokeWidth="6">
        <line {...radial(220.99, 554, 739)} stroke="#ff0000" />
        <line {...radial(40.99, 554, 739)} stroke="#b22222" />
        <line {...radial(270.93, 554, 737)} stroke="#ff1493" />
        <line {...radial(90.93, 554, 737)} stroke="#9400d3" />
        <line {...radial(180, 356, 540)} stroke="#ff0000" />
        <line {...radial(0, 356, 540)} stroke="#b22222" />
        <line {...radial(250.7, 356, 540)} stroke="#ff1493" />
        <line {...radial(70.7, 356, 540)} stroke="#9400d3" />
        <line {...radial(180, 803, 818)} stroke="#ff0000" />
        <line {...radial(0, 803, 818)} stroke="#b22222" />
        <line {...radial(250.7, 803, 818)} stroke="#ff1493" />
        <line {...radial(70.7, 803, 818)} stroke="#9400d3" />
      </g>

      {/* dots on the rings */}
      {MIDDLE_DOTS.map(([x, y]) => (
        <circle key={`${x}-${y}`} cx={x} cy={y} r="7" fill="#0000b8" />
      ))}
      {INNER_DOTS.map(([x, y, color]) => (
        <circle key={`${x}-${y}`} cx={x} cy={y} r="7" fill={color} />
      ))}

      {/* aspects */}
      {ASPECT_LINES.map(([color, width, d]) => (
        <path key={d} d={d} fill="none" stroke={color} strokeWidth={width} />
      ))}
      {ASPECT_MARKS.map(([x, y, color, d]) => (
        <path key={`${x}-${y}`} d={d} transform={`translate(${x} ${y})`} fill="none" stroke={color} strokeWidth="3" />
      ))}
      <g transform="translate(1968 998)" fill="none" stroke="#000000" strokeWidth="2">
        <circle cx="-7" cy="6" r="4" />
        <circle cx="7" cy="-6" r="4" />
        <path d="M-4 3L4-3" />
      </g>

      <Bodies items={DARK_BODIES} color="#000000" />
      <Bodies items={RED_BODIES} color="#b80000" />

      {HOUSES.map(([numeral, x, y, degree, dx, dy, bar]) => (
        <g key={numeral}>
          <text x={x} y={y} fontSize="32" textAnchor="middle" className="font-['Noto_Sans_CJK_JP'] font-medium">
            {numeral}
          </text>
          <rect x={x - bar / 2} y={y - 25} width={bar} height="3" />
          <rect x={x - bar / 2} y={y - 2} width={bar} height="3" />
          <text x={dx} y={dy} fontSize="20">{degree}</text>
        </g>
      ))}

      {/* angles */}
      <g fill="#ffffff" textAnchor="middle" className="font-['Liberation_Sans']">
        <rect x="1674" y="182" width="32" height="32" fill="#ff1493" />
        <text x="1690" y="206" fontSize="20" fontWeight="700">MC</text>
        <rect x="2234" y="1782" width="34" height="32" fill="#9400d3" />
        <text x="2251" y="1807" fontSize="26" fontWeight="700">IC</text>
        <circle cx="1124" cy="997" r="18" fill="#ff0000" />
        <text x="1124" y="1006" fontSize="24">As</text>
        <circle cx="2817" cy="998" r="18" fill="#b22222" />
        <text x="2817" y="1006" fontSize="24">Ds</text>
      </g>
      <g fontSize="20">
        <text x="1709" y="178">21</text>
        <text x="2269" y="1778">21</text>
        <text x="1141" y="978">2</text>
        <text x="2835" y="978">2</text>
      </g>
    </svg>
  );
}

/* ---------- page ---------- */

const EVENTS = [
  { text: "25.01.1938 09:20:00 Высоцкий Владимир - рожден...", style: "bg-[#ffe4e1]" },
  { text: "25.01.1938 09:40:00 Высоцкий Владимир - рожден...", style: "bg-[#ffe4e1]" },
  {
    text: "25.01.1938 09:34:00 Высоцкий Владимир - рожден...",
    style: "bg-[#3399ff] text-white outline-2 -outline-offset-2 outline-dotted outline-[#9a7050]",
  },
  { text: "10.05.1938 10:50:00 Влади Марина", style: "bg-[#e6e6fa]" },
  { text: "16.08.1939 15:00:00 Абрамова Людмила Владими...", style: "bg-[#e6e6fa]" },
  { text: "22.01.1937 16:00:00 Мешкова Изольда Константин...", style: "bg-[#e6e6fa]" },
];

function EventPanel() {
  return (
    <section className="flex w-[1012px] shrink-0 flex-col pr-[6px] pl-2">
      <h1 className="h-[44px] pt-1 text-center font-['Liberation_Sans'] text-[33px] leading-[36px] text-[#1a6a8c]">
        Временные точки
      </h1>
      <div className="flex gap-2">
        {LIST_TOOLS.map((tool) => (
          <Tool key={tool.label} {...tool} />
        ))}
      </div>
      <ul className="my-[10px] ml-[2px] flex-1 border-2 border-[#5a6a6c] bg-[#f9ffff] pr-[46px] pl-2">
        {EVENTS.map((event) => (
          <li key={event.text}>
            <button
              type="button"
              className={`block h-[52px] w-full overflow-hidden pl-1 text-left font-['Liberation_Sans'] text-[38px] leading-[54px] whitespace-nowrap ${event.style}`}
            >
              {event.text}
            </button>
          </li>
        ))}
      </ul>
      <div className="flex gap-2 pb-[2px]">
        {EDIT_TOOLS.map((tool) => (
          <Tool key={tool.label} {...tool} />
        ))}
      </div>
    </section>
  );
}

function SideBar() {
  return (
    <aside className="flex w-20 shrink-0 flex-col items-center gap-9 pt-2">
      <div className="flex flex-col gap-2">
        {SIDE_TOP.map((tool) => (
          <Tool key={tool.label} {...tool} />
        ))}
      </div>
      <div className="flex w-[72px] flex-col">
        <div className="relative flex h-[164px] flex-col">
          {TEAL_SHADES.map((shade) => (
            <div key={shade} className={`flex-1 ${shade}`} />
          ))}
          <div className="absolute inset-x-0 bottom-10 h-[2px] bg-[#1f7674]" />
        </div>
        <Tool label="Прозрачность" icon={WHEEL_ICON} />
        <div className="relative flex h-[164px] flex-col">
          {PURPLE_SHADES.map((shade) => (
            <div key={shade} className={`flex-1 ${shade}`} />
          ))}
          <div className="absolute inset-x-0 top-10 h-[2px] bg-[#9c30b6]" />
        </div>
      </div>
      <div className="flex flex-col gap-2">
        {SIDE_RINGS.map((tool) => (
          <Tool key={tool.label} {...tool} />
        ))}
      </div>
      <div className="flex flex-col gap-2">
        {SIDE_START.map((tool) => (
          <Tool key={tool.label} {...tool} />
        ))}
      </div>
    </aside>
  );
}

function BottomBar() {
  return (
    <footer className="flex h-20 shrink-0 items-center overflow-hidden pl-4">
      <input
        aria-label="Дата и время"
        defaultValue="25.01.1938 09:34:00"
        className="mr-3 h-[58px] w-[432px] shrink-0 border-2 border-[#5a6a6c] bg-[#f9ffff] px-[2px] pb-2 font-['Liberation_Mono'] text-[36px] leading-[40px] font-bold text-black"
      />
      <div className="flex gap-9">
        {BOTTOM_GROUPS.map((group) => (
          <div key={group[0].label} className="flex gap-2">
            {group.map((tool) => (
              <Tool key={tool.label} {...tool} />
            ))}
          </div>
        ))}
      </div>
    </footer>
  );
}

export default function App() {
  return (
    <div className="flex h-screen flex-col overflow-hidden bg-[#c2f0ee] text-black">
      <nav className="flex h-20 shrink-0 items-center justify-between bg-[#29adae] px-1">
        <div className="flex gap-2">
          {MAIN_TABS.map((tool) => (
            <Tool key={tool.label} {...tool} wide />
          ))}
        </div>
        <div className="flex gap-2">
          {WINDOW_TOOLS.map((tool) => (
            <Tool key={tool.label} {...tool} />
          ))}
        </div>
      </nav>

      <div className="flex min-h-0 flex-1 pt-1 pr-1 pb-1">
        <EventPanel />
        <main className="flex min-w-0 flex-1 flex-col bg-[#29adae]">
          <div className="flex min-h-0 flex-1">
            <div className="relative ml-4 min-w-0 flex-1 bg-[#c2f0ee]">
              <NatalChart />
              <div className="absolute inset-x-0 top-2 flex justify-center">
                <div className="font-['Liberation_Sans'] text-[32px] leading-[36px] whitespace-nowrap">
                  <p>P2-TrueDay=YearTrop: брак с Мариной Влади</p>
                  <p className="-ml-5">• В: Высоцкий Владимир - рождение</p>
                </div>
              </div>
            </div>
            <SideBar />
          </div>
          <BottomBar />
        </main>
      </div>
    </div>
  );
}
